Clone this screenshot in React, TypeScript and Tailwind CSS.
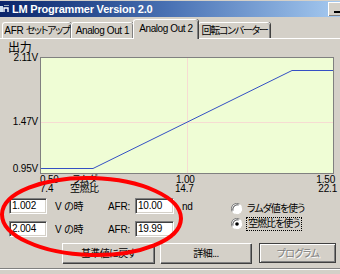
import React from 'react';

// Windows 2000 style dialog, classic grey chrome
const FONT = "[font-family:'Liberation_Sans','Noto_Sans_CJK_JP',sans-serif]";

function Tab({ label, width, active = false, tight = false }: { label: React.ReactNode; width: string; active?: boolean; tight?: boolean }) {
  if (active) {
    return (
      <div
        className={`relative z-10 -mb-px h-[20px] ${width} shrink-0 rounded-t-[3px] border-l border-t border-white bg-[#d4d0c8] pt-[2px] text-center leading-[14px] shadow-[inset_-1px_0_0_#808080,1px_0_0_#404040]`}
      >
        {label}
      </div>
    );
  }
  return (
    <div
      className={`h-[16px] ${width} shrink-0 overflow-hidden rounded-t-[3px] border-l border-t border-white pt-[1px] text-center leading-[13px] shadow-[inset_-1px_0_0_#808080,1px_0_0_#404040] ${
        tight ? 'tracking-[-1.3px]' : ''
      }`}
    >
      {label}
    </div>
  );
}

function TextBox({ value, width }: { value: string; width: string }) {
  return (
    <div
      className={`h-[16px] ${width} border border-t-[#808080] border-l-[#808080] border-r-white border-b-white bg-white pl-[2px] leading-[14px] shadow-[inset_1px_1px_0_#404040,inset_-1px_-1px_0_#d4d0c8]`}
    >
      {value}
    </div>
  );
}

function Radio({ checked = false }: { checked?: boolean }) {
  return (
    <svg width="12" height="12" viewBox="0 0 12 12" className="shrink-0">
      <circle cx="6" cy="6" r="5.5" fill="#fff" />
      <path d="M1 8.5 A5.5 5.5 0 0 1 8.5 1" fill="none" stroke="#808080" strokeWidth="1" />
      <path d="M2 7.5 A4.5 4.5 0 0 1 7.5 2" fill="none" stroke="#404040" strokeWidth="1" />
      <path d="M3.5 11 A5.5 5.5 0 0 0 11 3.5" fill="none" stroke="#d4d0c8" strokeWidth="1" />
      {checked && <circle cx="6" cy="6" r="1.8" fill="#000" />}
    </svg>
  );
}

function Button({ label, width, disabled = false, isDefault = false }: { label: string; width: string; disabled?: boolean; isDefault?: boolean }) {
  return (
    <div
      className={`flex h-[20px] ${width} shrink-0 items-center justify-center ${
        isDefault ? 'border border-[#404040]' : ''
      } bg-[#d4d0c8]`}
    >
      <div className="flex h-full w-full items-center justify-center border-l border-t border-white shadow-[inset_-1px_-1px_0_#808080,1px_1px_0_#404040]">
        <span className={disabled ? 'text-[#808080] [text-shadow:1px_1px_0_#fff]' : ''}>{label}</span>
      </div>
    </div>
  );
}

export default function App() {
  return (
    <div
      className={`relative h-[274px] w-[340px] overflow-hidden whitespace-nowrap bg-[#d4d0c8] text-[10px] tracking-[-0.2px] text-black [font-feature-settings:'palt'] ${FONT}`}
    >
      {/* Title bar */}
      <div className="flex h-[17px] items-center border-t border-[#d4d0c8] bg-gradient-to-r from-[#0a246a] via-[#4a72b4] to-[#a6caf0]">
        <svg width="10" height="12" viewBox="0 0 10 12" className="shrink-0">
          <rect x="0" y="3" width="3" height="6" fill="#cfe0f0" />
          <path d="M4 9 V5 H8 V9" fill="none" stroke="#fff" strokeWidth="1.4" />
          <rect x="4" y="2" width="5" height="1" fill="#9ab" />
        </svg>
        <span className="ml-[2px] text-[11px] font-bold leading-none tracking-[-0.2px] text-white">LM Programmer Version 2.0</span>
        <div className="ml-auto -mr-[4px] flex h-[14px] w-[16px] shrink-0 items-end justify-center border-l border-t border-white bg-[#d4d0c8] pb-[3px] shadow-[inset_-1px_-1px_0_#808080]">
          <div className="h-[2px] w-[6px] bg-black" />
        </div>
      </div>

      {/* Tabs */}
      <div className="flex h-[21px] items-end pl-[2px] tracking-[-0.4px]">
        <Tab
          label={
            <>
              <span className="tracking-[-0.3px]">AFR </span>
              <span>セットアップ</span>
            </>
          }
          width="w-[69px]"
          tight
        />
        <Tab label="Analog Out 1" width="w-[62px]" />
        <Tab label="Analog Out 2" width="w-[65px]" active />
        <Tab label="回転コンバーター" width="w-[72px]" tight />
      </div>

      {/* Tab page */}
      <div className="flex flex-col border-t border-white">
        <div className="ml-[8px] mt-[2px] h-[15px] text-[12px] leading-[14px]">出力</div>

        {/* Chart */}
        <div className="mt-[1px] flex h-[117px]">
          <div className="relative w-[40px] shrink-0 leading-[10px]">
            <span className="absolute right-[2px] top-[-4px]">2.11V</span>
            <span className="absolute right-[2px] top-[60px]">1.47V</span>
            <span className="absolute right-[2px] top-[107px]">0.95V</span>
          </div>
          <svg width="294" height="117" viewBox="0 0 294 117" className="shrink-0">
            <rect x="0.5" y="0.5" width="293" height="116" fill="#effdd5" stroke="#808080" />
            <line x1="147.5" y1="1" x2="147.5" y2="116" stroke="#f6dcd2" />
            <line x1="1" y1="65.5" x2="293" y2="65.5" stroke="#f6dcd2" />
            <polyline points="1,111.5 53,111.5 252,13.5 293,13.5" fill="none" stroke="#3450c4" strokeWidth="1" />
          </svg>
        </div>
        <div className="relative h-[22px] leading-[9px]">
          <span className="absolute left-[40px] top-[1px]">0.50</span>
          <span className="absolute left-[40px] top-[10px]">7.4</span>
          <span className="absolute left-[72px] top-[1px] tracking-[-0.8px]">ラムダ</span>
          <span className="absolute left-[70px] top-[10px] tracking-[-0.5px]">空燃比</span>
          <span className="absolute left-[176px] top-[1px]">1.00</span>
          <span className="absolute left-[175px] top-[10px]">14.7</span>
          <span className="absolute right-[5px] top-[1px]">1.50</span>
          <span className="absolute right-[3px] top-[10px]">22.1</span>
        </div>

        {/* Inputs and radios */}
        <div className="mt-[2px] flex">
          <div className="flex w-[231px] shrink-0 flex-col gap-[7px] pl-[9px]">
            <div className="flex h-[16px] items-center">
              <TextBox value="1.002" width="w-[38px]" />
              <span className="ml-[8px] w-[53px]">V の時</span>
              <span className="w-[27px]">AFR:</span>
              <TextBox value="10.00" width="w-[39px]" />
              <span className="ml-[8px]">nd</span>
            </div>
            <div className="flex h-[16px] items-center">
              <TextBox value="2.004" width="w-[38px]" />
              <span className="ml-[8px] w-[53px]">V の時</span>
              <span className="w-[27px]">AFR:</span>
              <TextBox value="19.99" width="w-[39px]" />
            </div>
          </div>
          <div className="flex flex-col pt-[3px] tracking-[-1px]">
            <div className="flex h-[15px] items-center gap-[3px]">
              <Radio />
              <span className="px-[1px]">ラムダ値を使う</span>
            </div>
            <div className="flex h-[15px] items-center gap-[3px]">
              <Radio checked />
              <span className="border border-dotted border-black px-[1px] leading-[12px]">空燃比を使う</span>
            </div>
          </div>
        </div>

        {/* Buttons */}
        <div className="mt-[6px] flex pl-[62px] tracking-[-0.6px]">
          <Button label="基準値に戻す" width="w-[92px]" />
          <div className="ml-[6px]">
            <Button label="詳細..." width="w-[91px]" />
          </div>
          <div className="ml-[8px]">
            <Button label="プログラム" width="w-[77px]" disabled isDefault />
          </div>
        </div>

        <div className="mt-[5px] border-t border-[#808080]" />
        <div className="border-t border-white" />
      </div>

      {/* Red highlight ring drawn over the dialog */}
      <svg width="340" height="274" viewBox="0 0 340 274" className="pointer-events-none absolute inset-0">
        <ellipse cx="91.5" cy="216.5" rx="89.5" ry="38.5" fill="none" stroke="#ff0000" strokeWidth="4" transform="rotate(1.5 91.5 216.5)" />
      </svg>
    </div>
  );
}
